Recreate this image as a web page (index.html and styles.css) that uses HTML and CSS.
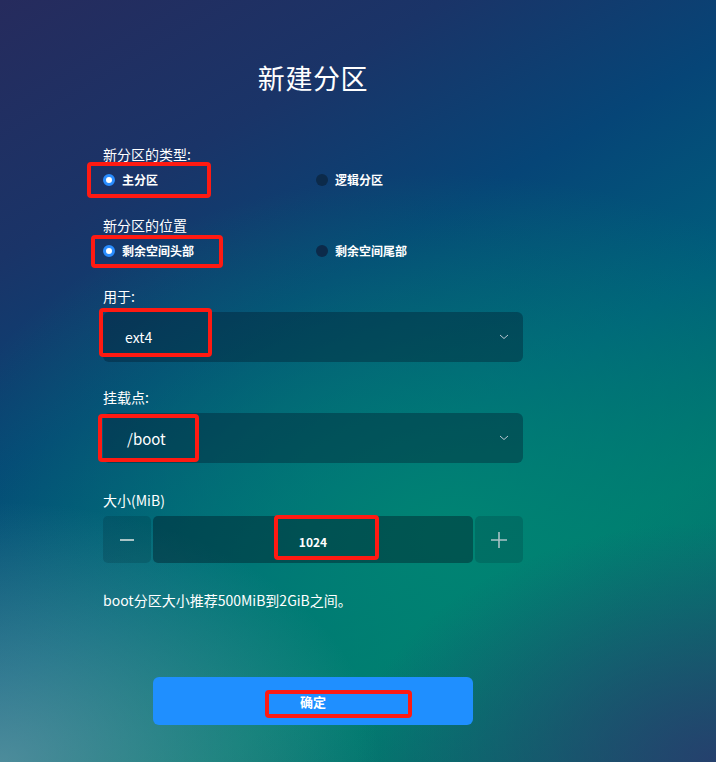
FILE: index.html
```html
<!DOCTYPE html>
<html lang="zh-CN">
<head>
<meta charset="utf-8">
<title>新建分区</title>
<link rel="stylesheet" href="styles.css">
</head>
<body>
<main class="page">
  <h1 class="title">新建分区</h1>
  <div class="form">
    <div class="label">新分区的类型:</div>
    <div class="radios">
      <div class="radio checked"><span class="dot"></span><span>主分区</span><i class="mark mark-type"></i></div>
      <div class="radio"><span class="dot"></span><span>逻辑分区</span></div>
    </div>

    <div class="label gap">新分区的位置</div>
    <div class="radios">
      <div class="radio checked"><span class="dot"></span><span>剩余空间头部</span><i class="mark mark-pos"></i></div>
      <div class="radio"><span class="dot"></span><span>剩余空间尾部</span></div>
    </div>

    <div class="label gap">用于:</div>
    <div class="select">
      <span class="value v1">ext4</span>
      <svg class="chev" width="10" height="6" viewBox="0 0 10 6"><path d="M1 1 L5 4.5 L9 1" fill="none" stroke="#b9c7d2" stroke-width="1"/></svg>
      <i class="mark mark-fs"></i>
    </div>

    <div class="label gap">挂载点:</div>
    <div class="select">
      <span class="value v2">/boot</span>
      <svg class="chev" width="10" height="6" viewBox="0 0 10 6"><path d="M1 1 L5 4.5 L9 1" fill="none" stroke="#b9c7d2" stroke-width="1"/></svg>
      <i class="mark mark-mp"></i>
    </div>

    <div class="label gap gap-size">大小(MiB)</div>
    <div class="spin">
      <div class="step"><svg width="16" height="16" viewBox="0 0 16 16"><path d="M1 8 H15" stroke="#a9c4c6" stroke-width="2"/></svg></div>
      <div class="num"><span>1024</span><i class="mark mark-size"></i></div>
      <div class="step"><svg width="16" height="16" viewBox="0 0 16 16"><path d="M0 8 H16 M8 0 V16" stroke="#a9c4c6" stroke-width="1.6"/></svg></div>
    </div>

    <p class="hint">boot分区大小推荐500MiB到2GiB之间。</p>

    <div class="actions">
      <button class="ok"><span>确定</span><i class="mark mark-ok"></i></button>
    </div>
  </div>
</main>
</body>
</html>
```
FILE: styles.css
```css
html, body {
  margin: 0;
  padding: 0;
}
body {
  width: 716px;
  height: 762px;
  overflow: hidden;
  font-family: "Noto Sans CJK SC", "Noto Sans", sans-serif;
  color: #ffffff;
  background:
    radial-gradient(ellipse 380px 260px at 0% 100%, rgba(140,170,185,0.55), rgba(140,170,185,0) 100%),
    radial-gradient(ellipse 360px 240px at 100% 100%, rgba(40,60,110,0.9), rgba(40,60,110,0) 100%),
    radial-gradient(ellipse 520px 360px at 62% 70%, rgba(0,135,115,0.9), rgba(0,135,115,0) 100%),
    linear-gradient(150deg, #262b5d 0%, #1a3468 22%, #064577 40%, #005e7c 58%, #00756f 75%, #0b6467 100%);
}
.page {
  width: 420px;
  height: 762px;
  padding-left: 103px;
  display: flex;
  flex-direction: column;
}
.title {
  margin: 59px 0 0;
  font-size: 27px;
  line-height: 37px;
  font-weight: 400;
  letter-spacing: 0.6px;
  text-align: center;
}
.form {
  width: 420px;
  margin: 48px 0 0;
  display: flex;
  flex-direction: column;
}
.label {
  font-size: 14px;
  line-height: 20px;
  margin-bottom: 6px;
}
.label.gap { margin-top: 25px; }
.label.gap-size { margin-top: 27px; }
.radios {
  display: grid;
  grid-template-columns: 213px 1fr;
  height: 20px;
  align-items: center;
}
.radio {
  position: relative;
  display: flex;
  align-items: center;
  font-size: 12px;
  font-weight: 700;
  line-height: 20px;
}
.dot {
  width: 12px;
  height: 12px;
  border-radius: 50%;
  background: #0c2a4a;
  margin-right: 7px;
  box-sizing: border-box;
}
.radio.checked .dot {
  background: #ffffff;
  border: 3px solid #2a8dff;
}
.select {
  position: relative;
  height: 50px;
  border-radius: 6px;
  background: rgba(2, 25, 45, 0.38);
  display: flex;
  align-items: center;
  justify-content: space-between;
  padding: 0 14px 0 22px;
}
.value { font-size: 14px; }
.value.v2 { font-size: 15px; padding-left: 2px; }
.chev { margin-top: -1px; }
.spin {
  display: flex;
  gap: 2px;
  height: 47px;
}
.step {
  width: 48px;
  border-radius: 5px;
  background: rgba(0, 30, 40, 0.18);
  display: flex;
  align-items: center;
  justify-content: center;
}
.num {
  position: relative;
  flex: 1;
  border-radius: 5px;
  background: rgba(0, 25, 35, 0.42);
  display: flex;
  align-items: center;
  justify-content: center;
  font-size: 12px;
  font-weight: 700;
  padding-top: 3px;
}
.hint {
  margin: 27px 0 0;
  font-size: 14px;
  line-height: 20px;
}
.actions {
  margin-top: 67px;
  display: flex;
  justify-content: center;
}
.ok {
  position: relative;
  width: 320px;
  height: 48px;
  border: none;
  border-radius: 6px;
  background: #1f8fff;
  color: #ffffff;
  font-family: inherit;
  font-size: 13px;
  font-weight: 700;
  padding: 0;
}
.mark {
  position: absolute;
  border: 4px solid #ff1a12;
  border-radius: 4px;
  box-sizing: border-box;
  pointer-events: none;
}
.mark-type { left: -16px; top: -8px; width: 124px; height: 36px; }
.mark-pos { left: -12px; top: -6px; width: 132px; height: 33px; }
.mark-fs { left: -4px; top: -4px; width: 113px; height: 49px; }
.mark-mp { left: -5px; top: 1px; width: 101px; height: 48px; }
.mark-size { left: 121px; top: -1px; width: 105px; height: 45px; }
.mark-ok { left: 112px; top: 13px; width: 147px; height: 28px; }
```
